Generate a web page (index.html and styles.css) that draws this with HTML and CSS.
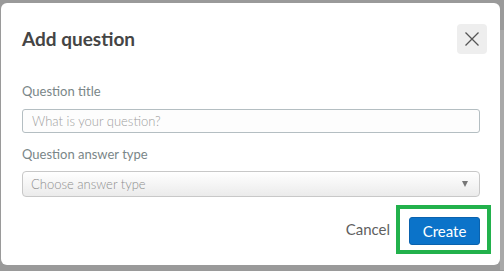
FILE: index.html
```html
<!DOCTYPE html>
<html>
<head>
<meta charset="utf-8">
<link rel="stylesheet" href="styles.css">
</head>
<body>
<div class="page">
  <div class="dialog">
    <div class="header">
      <h1 class="title">Add question</h1>
      <button class="close" aria-label="Close">
        <svg width="16" height="16" viewBox="0 0 16 16"><path d="M1.5 1.5 L14.5 14.5 M14.5 1.5 L1.5 14.5" stroke="#555" stroke-width="1.3" fill="none"/></svg>
      </button>
    </div>
    <div class="field first">
      <label class="label">Question title</label>
      <div class="input">What is your question?</div>
    </div>
    <div class="field second">
      <label class="label">Question answer type</label>
      <div class="select"><span>Choose answer type</span><span class="arrow"></span></div>
    </div>
    <div class="footer">
      <span class="cancel">Cancel</span>
      <div class="highlight">
        <button class="create">Create</button>
      </div>
    </div>
  </div>
  <div class="strip"></div>
</div>
</body>
</html>
```
FILE: styles.css
```css
html, body {
  margin: 0;
  padding: 0;
}
body {
  background: #9a9a9a;
  width: 504px;
  height: 271px;
  overflow: hidden;
  font-family: Lato, "Liberation Sans", sans-serif;
}
.page {
  display: flex;
  align-items: flex-start;
  padding: 3px 0 0 1px;
}
.dialog {
  width: 499px;
  height: 262px;
  box-sizing: border-box;
  background: #fff;
  border-radius: 6px;
  padding: 0 20px 0 21px;
  display: flex;
  flex-direction: column;
}
.strip {
  width: 4px;
  height: 240px;
  margin-top: 27px;
  background: #a9a9a9;
}
.header {
  display: flex;
  justify-content: space-between;
  align-items: center;
  margin-top: 21px;
  height: 30px;
  margin-right: -7px;
}
.title {
  margin: 0;
  font-size: 19px;
  font-weight: 700;
  color: #454545;
  line-height: 22px;
}
.close {
  width: 30px;
  height: 30px;
  border: none;
  border-radius: 4px;
  background: #eeeeee;
  padding: 0;
  display: flex;
  align-items: center;
  justify-content: center;
}
.field {
  display: flex;
  flex-direction: column;
}
.field.first { margin-top: 29px; }
.field.second { margin-top: 13px; }
.label {
  font-size: 13px;
  line-height: 16px;
  color: #7a8688;
}
.first .label { margin-bottom: 10px; }
.second .label { margin-bottom: 9px; }
.input {
  height: 24px;
  box-sizing: border-box;
  border: 1px solid #b4bec2;
  border-radius: 3px;
  background: #fdfdfd;
  padding-left: 9px;
  font-size: 13px;
  font-weight: 300;
  line-height: 22px;
  color: #a0a0a0;
}
.select {
  height: 26px;
  box-sizing: border-box;
  border: 1px solid #c8c8c8;
  border-radius: 4px;
  background: linear-gradient(#ffffff 0%, #f6f6f6 45%, #ebebeb 100%);
  padding: 0 11px 0 8px;
  font-size: 13px;
  font-weight: 300;
  line-height: 24px;
  color: #8e8e8e;
  display: flex;
  justify-content: space-between;
  align-items: center;
}
.arrow {
  width: 0;
  height: 0;
  border-left: 3.5px solid transparent;
  border-right: 3.5px solid transparent;
  border-top: 6px solid #777;
}
.footer {
  display: flex;
  justify-content: flex-end;
  align-items: center;
  margin-top: 8px;
  margin-right: -11px;
}
.cancel {
  font-size: 15px;
  color: #5f5f5f;
  margin-right: 6px;
  margin-top: -1px;
}
.highlight {
  border: 4px solid #22b14c;
  padding: 8px 7px 5px 9px;
  display: flex;
}
.create {
  width: 71px;
  height: 28px;
  border: 1px solid #0a62ae;
  border-radius: 3px;
  background: #0b73c9;
  color: #fff;
  font-family: Lato, "Liberation Sans", sans-serif;
  font-size: 15px;
  padding: 0;
}
```
